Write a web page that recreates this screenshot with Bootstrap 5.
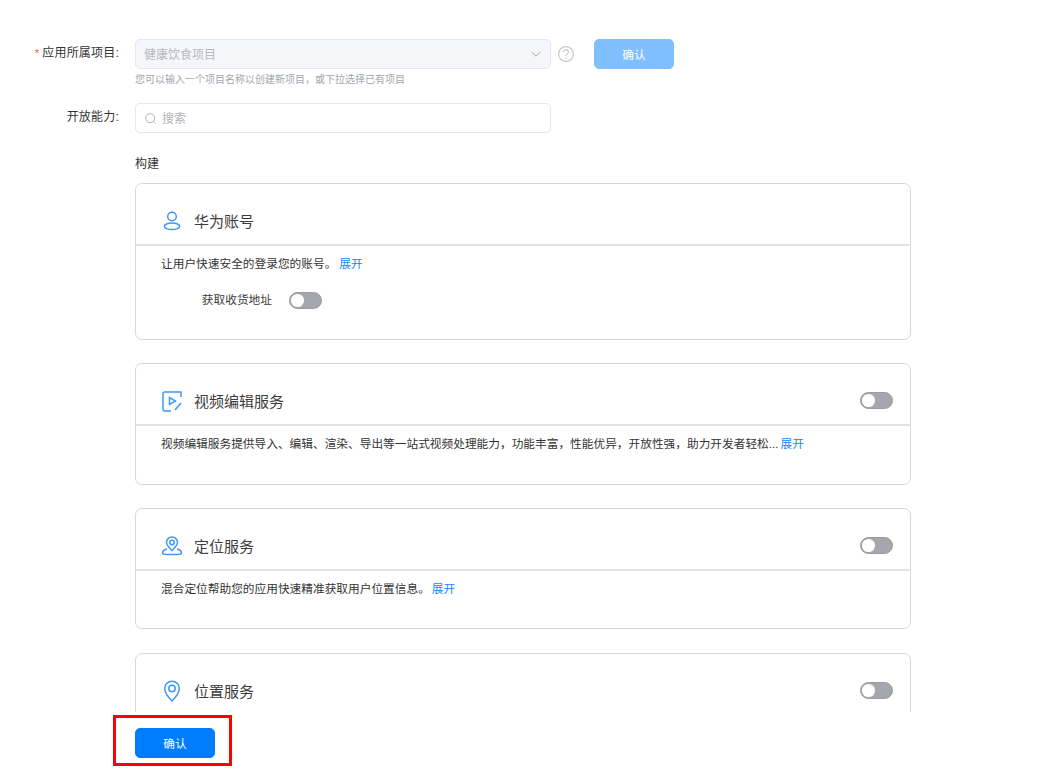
<!DOCTYPE html>
<html lang="zh">
<head>
<meta charset="utf-8">
<title>开放能力</title>
<link href="https://cdn.jsdelivr.net/npm/bootstrap@5.3.0/dist/css/bootstrap.min.css" rel="stylesheet">
<style>
html,body{height:100%;}
body{background:#fff;color:#3a3a3a;font-family:"Liberation Sans","Noto Sans CJK SC",sans-serif;font-size:11.7px;overflow:hidden;}
.scroll-zone{height:712px;overflow:hidden;padding:39px 0 0 0;}
.foot-zone{height:63px;padding:16px 0 0 135px;position:relative;}
.lbl{width:119px;margin-right:16px;text-align:right;color:#333;font-size:12px;letter-spacing:.2px;line-height:30px;flex:none;height:30px;margin-top:-1px;white-space:nowrap;}
.req{color:#f4566a;margin-right:3px;font-size:11px;}
.field-w{width:416px;flex:none;}
.ctl-sel.form-select{height:30px;min-height:30px;font-size:12px;padding:2px 30px 0 8px;border:1px solid #e4e6ed;border-radius:5px;background-color:#f4f6fa;color:#b6b9c1;opacity:1;
background-image:url("data:image/svg+xml,%3Csvg xmlns='http://www.w3.org/2000/svg' viewBox='0 0 10 6'%3E%3Cpath d='M.6.8 5 5.2 9.4.8' fill='none' stroke='%23a8abb3' stroke-width='1'/%3E%3C/svg%3E");background-size:10px 6px;background-position:right 9px center;}
.ctl-search{height:30px;border:1px solid #e4e6ed;border-radius:5px;padding:0 9px;background:#fff;gap:6px;}
.ctl-search input{border:0;outline:0;padding:2px 0 0;font-size:12px;width:100%;background:transparent;color:#333;}
.ctl-search input::placeholder{color:#b0b3bb;opacity:1;}
.hint{font-size:10px;line-height:14px;color:#a3a6ad;margin-top:4px;}
.q-icon{margin-left:7px;}
.btn-ok{width:80px;height:30px;padding:1px 0 0;background:#007dff;border:1px solid #007dff;border-radius:5px;color:#fff;font-size:11.7px;font-weight:400;line-height:27px;}
.btn-ok.is-off,.btn-ok.is-off:disabled{background:#7fbeff;border-color:#7fbeff;color:#fff;opacity:1;margin-left:20px;}
.sec-title{font-size:12px;color:#333;line-height:16px;margin:23px 0 11px 135px;}
.svc{width:776px;margin:0 0 23px 135px;border:1px solid #d8d8d8;border-radius:7px;background:#fff;--bs-card-inner-border-radius:6px;}
.svc.wide-gap{margin-bottom:24px;}
.svc .card-header{height:62px;background:transparent;border:0;border-bottom:2px solid #e3e3e3;padding:19px 17px 0 24px;}
.svc-ico{width:24px;height:24px;flex:none;margin:6px 10px 0 0;}
.svc-name{font-size:15px;line-height:36px;color:#3c3c3c;margin-top:1px;height:36px;}
.svc .card-body{padding:9px 25px 0;line-height:17px;color:#333;}
.more{color:#1a87f8;text-decoration:none;margin-left:3px;font-size:11.7px;}
.more.tight{margin-left:2px;}
.b1{height:93px;}.b2{height:58px;}.b3{height:57px;}
.sw-row{margin-top:19px;}
.sw-lbl{width:111px;text-align:right;color:#3c3c3c;font-size:11.7px;margin:0 17px 2px 0;}
.form-switch .sw{width:33px;height:17px;margin:0;border:1px solid #9a9ba3;background-color:#a6a7ae;border-radius:9px;float:none;
background-image:url("data:image/svg+xml,%3Csvg xmlns='http://www.w3.org/2000/svg' viewBox='0 0 16 16'%3E%3Ccircle cx='8' cy='8' r='7' fill='%23fff'/%3E%3C/svg%3E");background-position:left center;background-size:15px 15px;}
.sw-wrap{padding:0;min-height:0;margin:0;}
.sw-end{margin:9px 0 0 auto;line-height:0;}
.red-frame{position:absolute;left:113px;top:3px;width:119px;height:51px;border:3px solid #f00;pointer-events:none;}
</style>
</head>
<body>
<div class="scroll-zone">
  <div class="d-flex align-items-start">
    <div class="lbl"><span class="req">*</span>应用所属项目:</div>
    <div class="field-w">
      <select class="form-select ctl-sel" disabled aria-label="应用所属项目"><option>健康饮食项目</option></select>
      <div class="hint text-nowrap">您可以输入一个项目名称以创建新项目，或下拉选择已有项目</div>
    </div>
    <svg class="q-icon mt-1" width="16" height="22" viewBox="0 0 16 22" fill="none" stroke="#c9c9c9" stroke-width="1.2"><circle cx="8" cy="11" r="7.4"/><path d="M5.6 9a2.4 2.4 0 1 1 3.700 2c-.9.6-1.300 1-1.300 2v.5"/><path d="M8 15v1.200"/></svg>
    <button type="button" class="btn btn-ok is-off" disabled>确认</button>
  </div>
  <div class="d-flex align-items-start mt-3">
    <div class="lbl">开放能力:</div>
    <div class="field-w ctl-search d-flex align-items-center">
      <svg width="11" height="11" viewBox="0 0 12 12" fill="none" stroke="#a8abb3" stroke-width="1" class="flex-shrink-0"><circle cx="5.600" cy="5.600" r="4.900"/><path d="m9.200 9.200 2.200 2.200"/></svg>
      <input type="text" placeholder="搜索" aria-label="搜索">
    </div>
  </div>
  <div class="sec-title">构建</div>

  <div class="card svc">
    <div class="card-header d-flex align-items-start">
      <svg class="svc-ico" viewBox="0 0 24 24" fill="none" stroke="#3a99fb" stroke-width="1.500"><circle cx="12" cy="7.500" r="4.300"/><ellipse cx="12" cy="17.300" rx="7.700" ry="3.300"/></svg>
      <div class="svc-name">华为账号</div>
    </div>
    <div class="card-body b1">
      <div>让用户快速安全的登录您的账号。<a href="#" class="more">展开</a></div>
      <div class="d-flex align-items-center sw-row">
        <div class="sw-lbl">获取收货地址</div>
        <div class="form-check form-switch sw-wrap"><input class="form-check-input sw" type="checkbox" role="switch" aria-label="获取收货地址"></div>
      </div>
    </div>
  </div>

  <div class="card svc">
    <div class="card-header d-flex align-items-start">
      <svg class="svc-ico" viewBox="0 0 24 24" fill="none" stroke="#3a99fb" stroke-width="1.500"><path d="M21 8V3H4.500A1.500 1.500 0 0 0 3 4.500v16A1.500 1.500 0 0 0 4.500 22H11"/><path d="M9.500 8.500v7l6-3.500z"/><path d="m15 21 6-7"/></svg>
      <div class="svc-name">视频编辑服务</div>
      <div class="form-check form-switch sw-wrap sw-end"><input class="form-check-input sw" type="checkbox" role="switch" aria-label="视频编辑服务"></div>
    </div>
    <div class="card-body b2">
      <div class="text-nowrap">视频编辑服务提供导入、编辑、渲染、导出等一站式视频处理能力，功能丰富，性能优异，开放性强，助力开发者轻松...<a href="#" class="more tight">展开</a></div>
    </div>
  </div>

  <div class="card svc wide-gap">
    <div class="card-header d-flex align-items-start">
      <svg class="svc-ico" viewBox="0 0 24 24" fill="none" stroke="#3a99fb" stroke-width="1.500"><path d="M12 16.500C9 13.500 6.500 11.300 6.500 8.500a5.500 5.500 0 0 1 11 0c0 2.800-2.500 5-5.500 8z"/><circle cx="12" cy="8.500" r="2.200"/><path d="M7 15C4.500 15.800 2.500 17 2.500 18.500c0 1.300 1.500 2 3.500 2h12c2 0 3.500-.7 3.500-2 0-1.500-2-2.700-4.500-3.500"/></svg>
      <div class="svc-name">定位服务</div>
      <div class="form-check form-switch sw-wrap sw-end"><input class="form-check-input sw" type="checkbox" role="switch" aria-label="定位服务"></div>
    </div>
    <div class="card-body b3">
      <div>混合定位帮助您的应用快速精准获取用户位置信息。<a href="#" class="more tight">展开</a></div>
    </div>
  </div>

  <div class="card svc">
    <div class="card-header d-flex align-items-start">
      <svg class="svc-ico" viewBox="0 0 24 24" fill="none" stroke="#3a99fb" stroke-width="1.500"><path d="M12 22C7.500 17.500 4.700 14 4.700 9.500a7.300 7.300 0 0 1 14.600 0c0 4.500-2.800 8-7.300 12.500z"/><circle cx="12" cy="9.500" r="3.200"/></svg>
      <div class="svc-name">位置服务</div>
      <div class="form-check form-switch sw-wrap sw-end"><input class="form-check-input sw" type="checkbox" role="switch" aria-label="位置服务"></div>
    </div>
    <div class="card-body b2"></div>
  </div>
</div>
<div class="foot-zone">
  <button type="button" class="btn btn-ok">确认</button>
  <div class="red-frame"></div>
</div>
<script src="https://cdn.jsdelivr.net/npm/bootstrap@5.3.0/dist/js/bootstrap.bundle.min.js"></script>
</body>
</html>
